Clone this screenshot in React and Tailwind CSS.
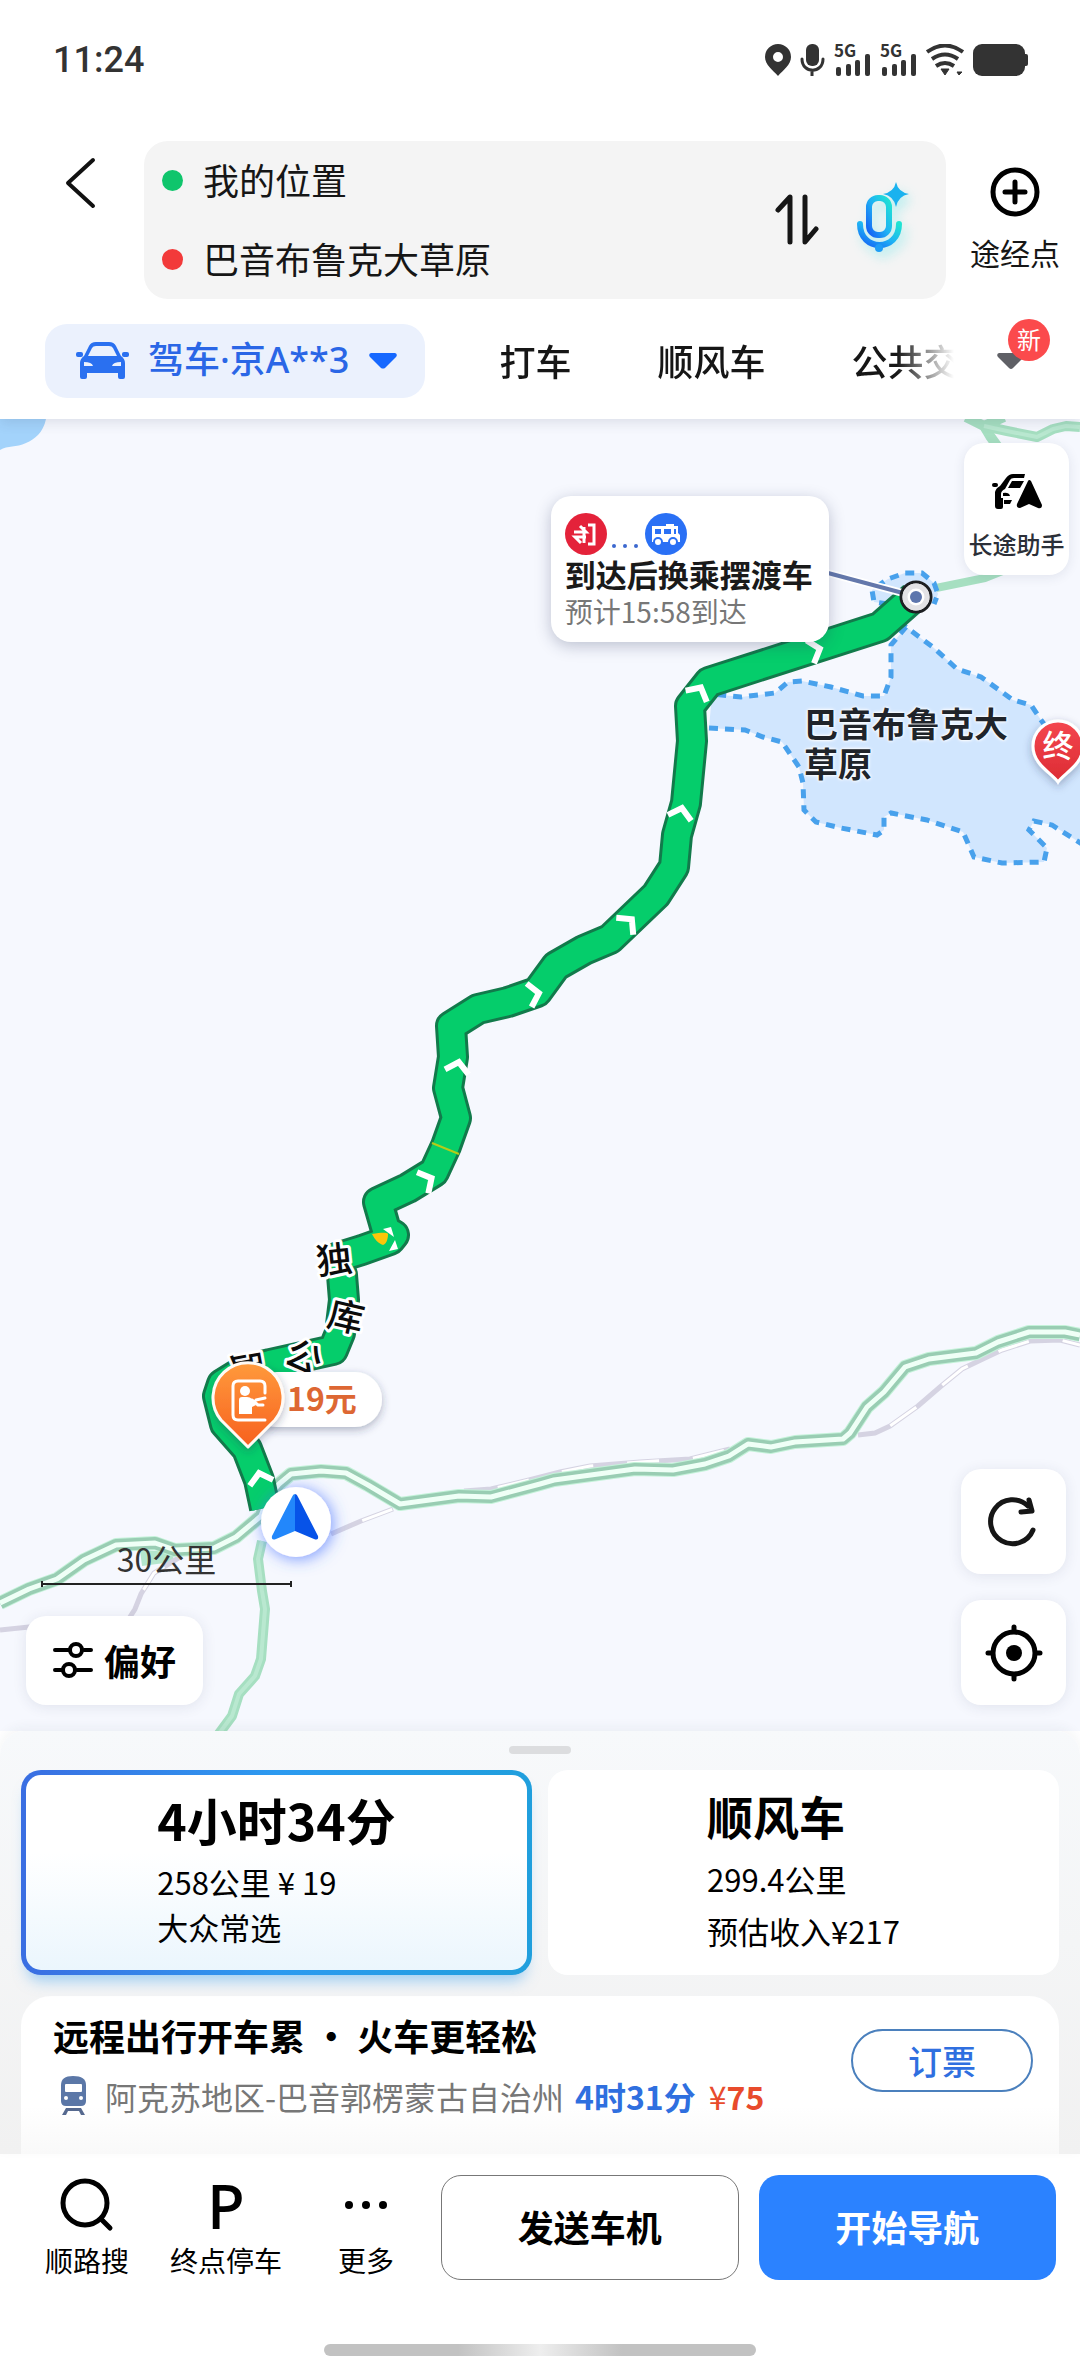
import React, { useState } from "react";

const tabs = ["打车", "顺风车", "公共交通"];

const routePoints =
  "265,1508 259,1480 247,1449 225,1424 218,1396 222,1384 243,1371 270,1364 333,1350 340,1333 344,1300 342,1275 336,1258 362,1250 390,1240 394,1235 386,1230 378,1202 408,1188 434,1172 446,1146 456,1118 448,1088 453,1057 451,1026 478,1009 508,1002 537,992 556,966 584,950 610,939 656,895 674,867 677,835 686,803 692,741 690,706 709,682 880,627 914,597";

const highwayPoints =
  "0,1603 29,1589 57,1579 84,1560 116,1545 155,1543 175,1550 214,1548 236,1537 261,1516 268,1498 279,1484 291,1474 321,1471 346,1473 368,1485 400,1504 459,1496 491,1497 540,1484 554,1480 635,1469 673,1470 705,1464 729,1456 748,1444 771,1447 795,1442 843,1439 850,1433 867,1407 884,1392 905,1367 929,1359 976,1353 998,1342 1029,1332 1065,1332 1080,1335";

const railways = [
  "0,1630 29,1627 60,1626",
  "128,1620 135,1609 141,1594 154,1573 180,1557",
  "331,1534 361,1521 393,1509",
  "464,1491 491,1489 529,1480 560,1472 590,1466 640,1462 690,1459 730,1449",
  "858,1435 875,1433 890,1426 918,1406 940,1387 962,1369 985,1358 1002,1350 1030,1341 1060,1340 1080,1345",
];

const scenicArea =
  "M709 728L745 730L763 737L782 742L799 767L803 783L804 810L816 822L841 828L877 835L884 830L884 817L891 813L927 820L963 832L974 857L1002 863L1044 862L1047 848L1029 830L1034 821L1052 825L1090 849L1090 762L1060 745L1041 720L1031 705L1013 700L981 677L957 669L934 648L906 627L891 645L891 677L884 696L863 696L831 687L802 681L788 682L775 693L741 697L712 694";

// x, y, rotation of the direction marks along the route
const arrows = [
  [816, 650, 72],
  [699, 691, 28],
  [681, 812, 14],
  [629, 922, 45],
  [535, 994, 78],
  [458, 1066, 12],
  [428, 1180, 62],
  [260, 1477, -14],
];

function MapCanvas() {
  return (
    <svg
      viewBox="0 419 1080 1312"
      preserveAspectRatio="xMidYMid slice"
      className="absolute inset-0 w-full h-full"
      fontFamily="Noto Sans CJK SC, sans-serif"
      role="img"
      aria-label="路线地图"
    >
      <defs>
        <linearGradient id="orangePin" x1="0" y1="0" x2="0" y2="1">
          <stop offset="0" stopColor="#ff9a3c" />
          <stop offset="1" stopColor="#f7601f" />
        </linearGradient>
        <linearGradient id="redPin" x1="0" y1="0" x2="0" y2="1">
          <stop offset="0" stopColor="#f4474f" />
          <stop offset="1" stopColor="#dc2b33" />
        </linearGradient>
        <filter id="soft" x="-50%" y="-50%" width="200%" height="200%">
          <feDropShadow dx="0" dy="3" stdDeviation="4" floodColor="#27345c" floodOpacity="0.35" />
        </filter>
        <filter id="glow" x="-50%" y="-50%" width="200%" height="200%">
          <feDropShadow dx="2" dy="2" stdDeviation="8" floodColor="#3f6dff" floodOpacity="0.7" />
        </filter>
      </defs>

      {/* water */}
      <path d="M0 419H46C43 433 35 439 26 443C16 448 8 445 0 450Z" fill="#a3d3fb" />

      {/* minor roads */}
      <g fill="none" stroke="#a6dfc1" strokeWidth="10" strokeLinejoin="round">
        <path d="M966 417L984 426L990 436L1000 450" />
        <path d="M1004 417L984 426L1007 431L1037 437L1053 429L1066 426L1080 427" />
        <path d="M936 588L985 578L1010 568" strokeWidth="8" />
        <path d="M262 1541L258 1559L262 1591L265 1609L261 1659L255 1676L239 1694L232 1716L218 1735" />
      </g>
      <g fill="none" stroke="#b9e8d0" strokeWidth="4" strokeLinejoin="round">
        <path d="M984 426L1007 431L1037 437L1053 429L1066 426L1080 427" />
        <path d="M262 1541L258 1559L262 1591L265 1609L261 1659L255 1676L239 1694L232 1716L218 1735" />
      </g>
      <path d="M140 1550L175 1552L172 1562L142 1566Z" fill="#b4e6cd" />

      {railways.map((points) => (
        <g key={points} fill="none">
          <polyline points={points} stroke="#d5d3e2" strokeWidth="5" />
          <polyline points={points} stroke="#ffffff" strokeWidth="3" strokeDasharray="32 34" strokeDashoffset="-34" />
        </g>
      ))}

      <polyline points={highwayPoints} fill="none" stroke="#c4f2d9" strokeWidth="14" strokeLinejoin="round" />
      <polyline points={highwayPoints} fill="none" stroke="#99cdb3" strokeWidth="12" strokeLinejoin="round" />
      <polyline points={highwayPoints} fill="none" stroke="#effff6" strokeWidth="5" strokeLinejoin="round" />

      {/* scenic area */}
      <path d={scenicArea} fill="#d1e6fe" stroke="#48a1ec" strokeWidth="5" strokeDasharray="9 7" />
      <path
        d="M888 604L874 602L872 590L888 579L905 573L922 573L934 583L938 594L934 604"
        fill="#d1e6fe"
        stroke="#48a1ec"
        strokeWidth="5"
        strokeDasharray="9 7"
      />

      {/* route */}
      <polyline points={routePoints} fill="none" stroke="#127a4b" strokeWidth="32" strokeLinejoin="round" />
      <polyline points={routePoints} fill="none" stroke="#05cd6b" strokeWidth="26" strokeLinejoin="round" />
      <path d="M432 1143L459 1154" stroke="#b5cc18" strokeWidth="2" />
      <path d="M372 1234C380 1233 386 1232 388 1234C388 1240 386 1244 383 1245C378 1243 375 1240 372 1234Z" fill="#fbc60a" />
      <path d="M383 1229L391 1227L394 1237ZM395 1240L398 1249L389 1251Z" fill="#ffffff" />
      {arrows.map(([x, y, angle]) => (
        <path
          key={x}
          d="M-12 6L0 -4L12 6"
          transform={`translate(${x} ${y}) rotate(${angle})`}
          fill="none"
          stroke="#ffffff"
          strokeWidth="6"
        />
      ))}

      <path d="M828 573L914 596" stroke="#ffffff" strokeWidth="8" />
      <path d="M828 573L914 596" stroke="#6478ab" strokeWidth="4" />
      <circle cx="916" cy="597" r="15" fill="#ffffff" stroke="#1d1f22" strokeWidth="3" />
      <circle cx="916" cy="597" r="11" fill="none" stroke="#e3e3e6" strokeWidth="5" />
      <circle cx="916" cy="597" r="6" fill="#5d76ad" />

      {/* road name */}
      <g
        stroke="#ffffff"
        strokeWidth="6"
        strokeLinejoin="round"
        paintOrder="stroke"
        textAnchor="middle"
        fontSize="36"
        fontWeight="500"
        fill="#0b0b0b"
      >
        <text transform="translate(334 1260) rotate(-6)" y="13">独</text>
        <text transform="translate(346 1317) rotate(13)" y="13">库</text>
        <text transform="translate(304 1358) rotate(28)" y="13">公</text>
        <text transform="translate(247 1370) rotate(80)" y="13">路</text>
      </g>

      {/* destination */}
      <path
        d="M1058 782C1052 773 1033 765 1033 746A25 25 0 0 1 1083 746C1083 765 1064 773 1058 782Z"
        fill="url(#redPin)"
        stroke="#ffffff"
        strokeWidth="3"
        filter="url(#soft)"
      />
      <text x="1058" y="757" fontSize="31" fill="#ffffff" fontWeight="500" textAnchor="middle">终</text>

      {/* toll gate */}
      <rect x="250" y="1372" width="132" height="55" rx="27" fill="#ffffff" filter="url(#soft)" />
      <text x="287" y="1411" fontSize="32" fill="#dd6733" fontWeight="700">19元</text>
      <path
        d="M248 1447L221 1420A35 35 0 1 1 275 1420Z"
        fill="url(#orangePin)"
        stroke="#fffaf5"
        strokeWidth="3"
        strokeLinejoin="round"
        filter="url(#soft)"
      />
      <g fill="none" stroke="#ffffff" strokeWidth="3" strokeLinecap="round" strokeLinejoin="round">
        <path d="M265 1393V1386Q265 1381 260 1381H238Q233 1381 233 1386V1415Q233 1420 238 1420H265" />
        <path d="M252 1400L258 1405H263M256 1400L265 1398" />
      </g>
      <circle cx="245" cy="1391" r="5" fill="#ffffff" />
      <path d="M239 1400Q239 1397 242 1397H247Q250 1397 252 1399L256 1405L252 1407V1414H239Z" fill="#ffffff" />

      {/* current position */}
      <circle cx="296" cy="1522" r="35" fill="#ffffff" filter="url(#glow)" />
      <path d="M295 1494Q297 1494 298 1497L318 1536Q319 1541 314 1539L295 1531Z" fill="#0753e8" />
      <path d="M295 1494Q293 1494 292 1497L272 1536Q271 1541 276 1539L295 1531Z" fill="#2287fb" />
    </svg>
  );
}

function SignalIcon() {
  return (
    <span className="flex flex-col text-[17px] leading-[12px] font-bold">
      <span>5G</span>
      <svg width="37" height="24" viewBox="0 0 37 24" className="-mt-[3px]" fill="#333333">
        <rect x="2" y="14" width="5" height="9" rx="2" />
        <rect x="12" y="11" width="5" height="12" rx="2" />
        <rect x="21" y="7" width="5" height="16" rx="2" />
        <rect x="31" y="1" width="5" height="22" rx="2" />
      </svg>
    </span>
  );
}

function StatusBar() {
  return (
    <div className="flex items-center justify-between h-[120px] pl-[53px] pr-[52px] text-[#333333]">
      <span className="font-[Roboto] text-[36px] font-medium">11:24</span>
      <div className="flex items-center gap-[9px]">
        <svg width="26" height="32" viewBox="0 0 26 32" fill="#333333">
          <path fillRule="evenodd" d="M13 0A13 13 0 0 1 26 13C26 21 18 26 13 32C8 26 0 21 0 13A13 13 0 0 1 13 0ZM13 8A5 5 0 1 0 13 18A5 5 0 1 0 13 8Z" />
        </svg>
        <svg width="25" height="32" viewBox="0 0 25 32" fill="#333333">
          <rect x="6" y="0" width="13" height="22" rx="6" />
          <path d="M2 15C2 30 23 30 23 15M12 26V32" fill="none" stroke="#333333" strokeWidth="3" strokeLinecap="round" />
        </svg>
        <SignalIcon />
        <SignalIcon />
        <svg width="38" height="32" viewBox="0 0 38 32" fill="none" stroke="#333333" strokeWidth="4">
          <path d="M1 8Q19 -5 37 8M6 15Q19 6 32 15M10 22Q19 16 28 22" />
          <path d="M15 25H23L19 31ZM31 28H36L33 31Z" fill="#333333" strokeWidth="1" />
        </svg>
        <svg width="55" height="32" viewBox="0 0 55 32" fill="#333333">
          <rect width="52" height="32" rx="9" />
          <rect x="50" y="10" width="5" height="12" rx="2" />
        </svg>
      </div>
    </div>
  );
}

function Header() {
  const [from, setFrom] = useState("我的位置");
  const [to, setTo] = useState("巴音布鲁克大草原");

  const swap = () => {
    setFrom(to);
    setTo(from);
  };

  return (
    <header className="relative z-10 bg-white pb-[21px] shadow-[0_4px_12px_rgba(40,50,80,0.12)]">
      <StatusBar />

      <div className="flex items-start pt-[21px]">
        <button type="button" aria-label="返回" className="ml-[58px] mt-[14px] mr-[46px]">
          <svg width="40" height="56" viewBox="0 0 40 56" fill="none" stroke="#111111" strokeWidth="4" strokeLinecap="round" strokeLinejoin="round">
            <path d="M35 5L10 28L35 51" />
          </svg>
        </button>

        <div className="flex-1 min-w-0 flex items-center rounded-[24px] bg-[#f4f4f4] pl-[18px] pr-[36px]">
          <div className="flex-1 min-w-0 text-[36px] text-[#161616]">
            <label className="flex items-center gap-[20px] h-[79px]">
              <span className="w-[21px] h-[21px] rounded-full bg-[#0fc56c]"></span>
              <input
                type="text"
                aria-label="起点"
                value={from}
                onChange={(e) => setFrom(e.target.value)}
                className="flex-1 min-w-0 h-[60px] pb-[4px] bg-transparent focus:outline-none"
              />
            </label>
            <label className="flex items-center gap-[20px] h-[79px]">
              <span className="w-[21px] h-[21px] rounded-full bg-[#f23a3a]"></span>
              <input
                type="text"
                aria-label="终点"
                value={to}
                onChange={(e) => setTo(e.target.value)}
                className="flex-1 min-w-0 h-[60px] pb-[4px] bg-transparent focus:outline-none"
              />
            </label>
          </div>
          <button type="button" aria-label="交换起终点" onClick={swap} className="mr-[37px]">
            <svg width="44" height="52" viewBox="0 0 44 52" fill="none" stroke="#161616" strokeWidth="5" strokeLinecap="round" strokeLinejoin="round">
              <path d="M15 48V3L3 16M30 3V48L41 35" />
            </svg>
          </button>
          <button type="button" aria-label="语音输入">
            <svg width="54" height="76" viewBox="0 0 54 76" fill="none" className="drop-shadow-[4px_6px_6px_rgba(60,225,230,0.35)]">
              <defs>
                <linearGradient id="mic" x1="0" y1="1" x2="1" y2="0">
                  <stop offset="0" stopColor="#1560f5" />
                  <stop offset="50%" stopColor="#1eb2f4" />
                  <stop offset="1" stopColor="#20e4d2" />
                </linearGradient>
              </defs>
              <rect x="13" y="16" width="20" height="37" rx="9" stroke="url(#mic)" strokeWidth="6" />
              <path d="M4 42C4 70 43 70 43 42" stroke="url(#mic)" strokeWidth="6" strokeLinecap="round" />
              <circle cx="23" cy="66" r="4" fill="#1f9df5" />
              <path d="M40 0Q42 10 53 12Q42 14 40 25Q38 14 27 12Q38 10 40 0Z" fill="#1ab2ef" />
            </svg>
          </button>
        </div>

        <button type="button" className="w-[134px] mt-[25px] pl-[4px] flex flex-col items-center gap-[12px] text-[30px] leading-[44px] text-[#161616]">
          <svg width="52" height="52" viewBox="0 0 52 52" fill="none" stroke="#000000" strokeWidth="5" strokeLinecap="round">
            <circle cx="26" cy="26" r="22" />
            <path d="M16 26H36M26 16V36" />
          </svg>
          途经点
        </button>
      </div>

      <nav className="flex items-center mt-[25px]">
        <div className="flex-1 min-w-0 flex items-center gap-[86px] pl-[45px] overflow-hidden whitespace-nowrap text-[36px] leading-[50px] font-medium text-[#161616] [mask-image:linear-gradient(to_right,black_94%,transparent)]">
          <button type="button" className="flex-none flex items-center h-[74px] pl-[31px] pr-[28px] -mr-[12px] rounded-[22px] bg-[#ebf1fd] text-[#2a66e6]">
            <svg width="53" height="38" viewBox="0 0 53 38" fill="#2a70f0" className="mr-[19px]">
              <path fillRule="evenodd" d="M8 14L13 4Q15 0 20 0H33Q38 0 40 4L45 14Q49 17 49 21V35Q49 37 47 37H44Q42 37 42 35V31H11V35Q11 37 9 37H6Q4 37 4 35V21Q4 17 8 14ZM12 14H41L37 6Q36 4 33 4H20Q17 4 16 6ZM8 20V24H17Q16 20 8 20ZM45 20V24H36Q37 20 45 20Z" />
              <rect x="0" y="10" width="7" height="5" rx="2" />
              <rect x="46" y="10" width="7" height="5" rx="2" />
            </svg>
            <span className="pb-[2px] font-['Noto_Sans','Noto_Sans_CJK_SC',sans-serif]">驾车·京A**3</span>
            <svg width="28" height="16" viewBox="0 0 28 16" fill="#1668ff" className="ml-[20px]">
              <path d="M2 0H26Q29 1 27 4L16 15Q14 16 12 15L1 4Q-1 1 2 0Z" />
            </svg>
          </button>
          {tabs.map((name) => (
            <button key={name} type="button" className="flex-none pb-[3px]">
              {name}
            </button>
          ))}
        </div>
        <button type="button" aria-label="更多出行方式" className="relative w-[126px] h-[74px] pl-[43px]">
          <svg width="28" height="17" viewBox="0 0 28 17" fill="#5f6066">
            <path d="M2 0H26Q29 1 27 4L16 15Q14 17 12 15L1 4Q-1 1 2 0Z" />
          </svg>
          <span className="absolute left-[54px] -top-[5px] w-[42px] h-[42px] rounded-full bg-[#fb4a4c] text-white text-[24px] leading-[40px] text-center">
            新
          </span>
        </button>
      </nav>
    </header>
  );
}

function TransferCallout() {
  return (
    <div className="absolute left-[51%] top-[77px] w-[278px] h-[146px] pl-[14px] pt-[17px] rounded-[20px] bg-white shadow-[0_4px_16px_rgba(40,50,90,0.28)] whitespace-nowrap">
      <div className="flex items-center">
        <svg width="42" height="42" viewBox="0 0 42 42" fill="none" stroke="#ffffff" strokeWidth="3">
          <circle cx="21" cy="21" r="21" fill="#e4223a" stroke="none" />
          <path d="M23 12H29V31H23" />
          <path d="M9 19H21L15 13M21 24H10L16 30M19 14V30" />
        </svg>
        <svg width="38" height="42" viewBox="0 0 38 42" fill="#3b68cf">
          <circle cx="7" cy="33" r="2" />
          <circle cx="18" cy="33" r="2" />
          <circle cx="29" cy="33" r="2" />
        </svg>
        <svg width="42" height="42" viewBox="0 0 42 42">
          <circle cx="21" cy="21" r="21" fill="#2a70f5" />
          <path d="M7 13H21V11H29V13H33V20L35 22V29H7Z" fill="#ffffff" />
          <path d="M10 16H16V21H10ZM19 16H26V21H19ZM29 16H31V21H29Z" fill="#2a70f5" />
          <circle cx="13" cy="29" r="4" fill="#ffffff" stroke="#2a70f5" strokeWidth="2" />
          <circle cx="28" cy="29" r="4" fill="#ffffff" stroke="#2a70f5" strokeWidth="2" />
        </svg>
      </div>
      <p className="text-[31px] leading-[38px] font-bold text-[#1a1a1a]">到达后换乘摆渡车</p>
      <p className="text-[28px] leading-[36px] text-[#777777]">预计15:58到达</p>
    </div>
  );
}

function MapView() {
  return (
    <main className="relative flex-1 min-h-[1312px] bg-[#f6f8fe] overflow-hidden">
      <MapCanvas />
      <TransferCallout />

      <p className="absolute right-[70px] top-[284px] w-[206px] text-[34px] leading-[40px] font-bold text-[#20242a] [text-shadow:0_0_2px_white,0_0_3px_white,0_0_4px_white]">
        巴音布鲁克大草原
      </p>

      <button type="button" className="absolute right-[11px] top-[24px] w-[105px] h-[132px] flex flex-col items-center pt-[31px] gap-[16px] rounded-[20px] bg-white text-[24px] leading-[36px] font-medium text-[#2b2f38] shadow-[0_2px_12px_rgba(40,50,90,0.10)] whitespace-nowrap">
        <svg width="50" height="36" viewBox="0 0 50 36" fill="#000000">
          <path fillRule="evenodd" d="M14 4Q17 0 21 0H33L32 4H22Q19 4 18 6L13 15Q9 17 9 20V24H11V33Q11 35 9 35H6Q3 35 3 32V18Q4 14 8 12Z" />
          <path d="M20 7H32L28 14H16ZM11 19Q17 18 18 22H11ZM12 26H20L18 30H12Z" />
          <rect x="0" y="9" width="6" height="4" rx="2" />
          <path d="M36 7Q37 5 39 7L50 31Q50 35 46 34L37 30L28 34Q24 34 25 30Z" />
        </svg>
        长途助手
      </button>

      <div className="absolute left-[41px] bottom-[144px] w-[251px] text-center text-[32px] leading-[46px] text-[#333333]">
        30公里
        <div className="h-[6px] border-x-2 border-[#222222] flex items-center">
          <div className="w-full h-[2px] bg-[#222222]"></div>
        </div>
      </div>

      <button type="button" className="absolute left-[26px] bottom-[26px] h-[89px] px-[27px] pb-[2px] flex items-center gap-[11px] rounded-[20px] bg-white text-[36px] font-bold text-black shadow-[0_2px_14px_rgba(40,50,90,0.10)]">
        <svg width="40" height="36" viewBox="0 0 40 36" fill="none" stroke="#000000" strokeWidth="4" strokeLinecap="round">
          <path d="M2 8H16M31 8H38M2 28H9M24 28H38" />
          <circle cx="23" cy="8" r="6" />
          <circle cx="16" cy="28" r="6" />
        </svg>
        偏好
      </button>

      <div className="absolute right-[14px] bottom-[26px] flex flex-col gap-[26px]">
        <button type="button" aria-label="刷新路线" className="w-[105px] h-[105px] flex items-center justify-center rounded-[20px] bg-white shadow-[0_2px_14px_rgba(40,50,90,0.10)]">
          <svg width="56" height="56" viewBox="0 0 56 56" fill="none" stroke="#161616" strokeWidth="5" strokeLinecap="round" strokeLinejoin="round">
            <path d="M47 36A22 22 0 1 1 42 12" />
            <path d="M43 6L46 17L35 18" />
          </svg>
        </button>
        <button type="button" aria-label="定位" className="w-[105px] h-[105px] flex items-center justify-center rounded-[20px] bg-white shadow-[0_2px_14px_rgba(40,50,90,0.10)]">
          <svg width="60" height="60" viewBox="0 0 60 60" fill="none" stroke="#000000" strokeWidth="5" strokeLinecap="round">
            <circle cx="30" cy="30" r="21" />
            <path d="M30 4V8M30 52V56M4 30H8M52 30H56" />
            <circle cx="30" cy="30" r="8" fill="#000000" stroke="none" />
          </svg>
        </button>
      </div>
    </main>
  );
}

function RouteSheet() {
  return (
    <section className="relative px-[21px] bg-linear-to-b from-[#f7f9fb] to-[#f1f1f1] rounded-t-[24px] shadow-[0_-4px_12px_rgba(40,50,80,0.05)]">
      <div className="flex justify-center pt-[15px]">
        <div className="w-[62px] h-[8px] rounded-full bg-[#dcdddf]"></div>
      </div>

      <div className="grid grid-cols-2 gap-[16px] mt-[16px] text-black">
        <button type="button" className="h-[205px] p-[5px] rounded-[20px] bg-linear-to-r from-[#3a6ee2] via-[#2c9af0] to-[#209fdd] shadow-[0_12px_14px_-6px_rgba(80,170,240,0.5)]">
          <div className="h-full flex justify-center rounded-[15px] bg-linear-to-b from-white from-40% to-[#ebf6fd] text-left">
            <div className="pt-[6px] text-[31px] leading-[45px]">
              <h2 className="text-[50px] leading-[76px] font-bold">4小时34分</h2>
              <p className="mt-[2px]">258公里 ¥ 19</p>
              <p>大众常选</p>
            </div>
          </div>
        </button>
        <button type="button" className="h-[205px] flex justify-center rounded-[20px] bg-white text-left">
          <div className="pt-[7px] text-[31px] leading-[52px]">
            <h2 className="text-[46px] leading-[76px] font-bold">顺风车</h2>
            <p>299.4公里</p>
            <p>预估收入¥217</p>
          </div>
        </button>
      </div>

      <div className="mt-[21px] h-[158px] pl-[32px] pr-[26px] flex items-start justify-between rounded-t-[30px] bg-linear-to-b from-white from-70% to-[#f9f9f9]">
        <div className="pt-[12px] whitespace-nowrap">
          <h3 className="text-[36px] leading-[54px] font-bold text-black">远程出行开车累 · 火车更轻松</h3>
          <div className="flex items-center pl-[8px] mt-[8px] text-[32px] leading-[52px] text-[#777777]">
            <svg width="25" height="40" viewBox="0 0 25 40" className="mr-[19px]">
              <path d="M0 9Q0 0 12 0Q25 0 25 9V25Q25 30 20 30H5Q0 30 0 25Z" fill="#5b77a7" />
              <rect x="4" y="8" width="17" height="8" rx="1" fill="#ffffff" />
              <circle cx="5" cy="22" r="2" fill="#ffffff" />
              <circle cx="20" cy="22" r="2" fill="#ffffff" />
              <path d="M5 32H20L24 39H20L18 35H7L5 39H1Z" fill="#56698f" />
            </svg>
            <span>阿克苏地区-巴音郭楞蒙古自治州</span>
            <span className="ml-[11px] font-bold text-[#2f6fdf]">4时31分</span>
            <span className="ml-[13px] font-bold text-[#e84b2c]">
              <span className="font-normal">¥</span>75
            </span>
          </div>
        </div>
        <button type="button" className="mt-[33px] w-[182px] h-[63px] flex-none rounded-full border-2 border-[#4b80bd] text-[34px] leading-[56px] font-medium text-[#2f6fe0]">
          订票
        </button>
      </div>
    </section>
  );
}

function BottomBar() {
  return (
    <footer className="bg-white h-[222px] flex flex-col justify-between">
      <div className="flex items-start pl-[45px] pr-[24px] pt-[21px] text-black">
        <div className="flex-none flex text-[28px] leading-[40px] whitespace-nowrap">
          <button type="button" className="flex flex-col items-center">
            <svg width="54" height="65" viewBox="0 0 54 65" fill="none" stroke="#000000" strokeWidth="5" strokeLinecap="round">
              <circle cx="25" cy="28" r="22" />
              <path d="M41 44L50 53" />
            </svg>
            顺路搜
          </button>
          <button type="button" className="ml-[41px] flex flex-col items-center">
            <span className="h-[65px] font-['Noto_Sans'] text-[62px] leading-[60px] font-medium">P</span>
            终点停车
          </button>
          <button type="button" className="ml-[56px] flex flex-col items-center">
            <svg width="44" height="65" viewBox="0 0 44 65" fill="#000000">
              <circle cx="5" cy="30" r="4" />
              <circle cx="22" cy="30" r="4" />
              <circle cx="39" cy="30" r="4" />
            </svg>
            更多
          </button>
        </div>
        <div className="flex-1 grid grid-cols-2 gap-[20px] ml-[47px] text-[36px] font-bold">
          <button type="button" className="h-[105px] pb-[4px] rounded-[20px] border border-[#777777] bg-white">发送车机</button>
          <button type="button" className="h-[105px] pb-[4px] rounded-[20px] bg-[#2b82ff] text-white">开始导航</button>
        </div>
      </div>
      <div className="mx-auto mb-[20px] w-[40%] h-[12px] rounded-full bg-linear-to-r from-[#c2c2c2] from-31% via-[#eeeeee] via-50% to-[#c2c2c2] to-69%"></div>
    </footer>
  );
}

function App() {
  return (
    <div className="min-h-screen flex flex-col bg-white font-['Noto_Sans_CJK_SC',sans-serif]">
      <Header />
      <MapView />
      <RouteSheet />
      <BottomBar />
    </div>
  );
}

export default App;
